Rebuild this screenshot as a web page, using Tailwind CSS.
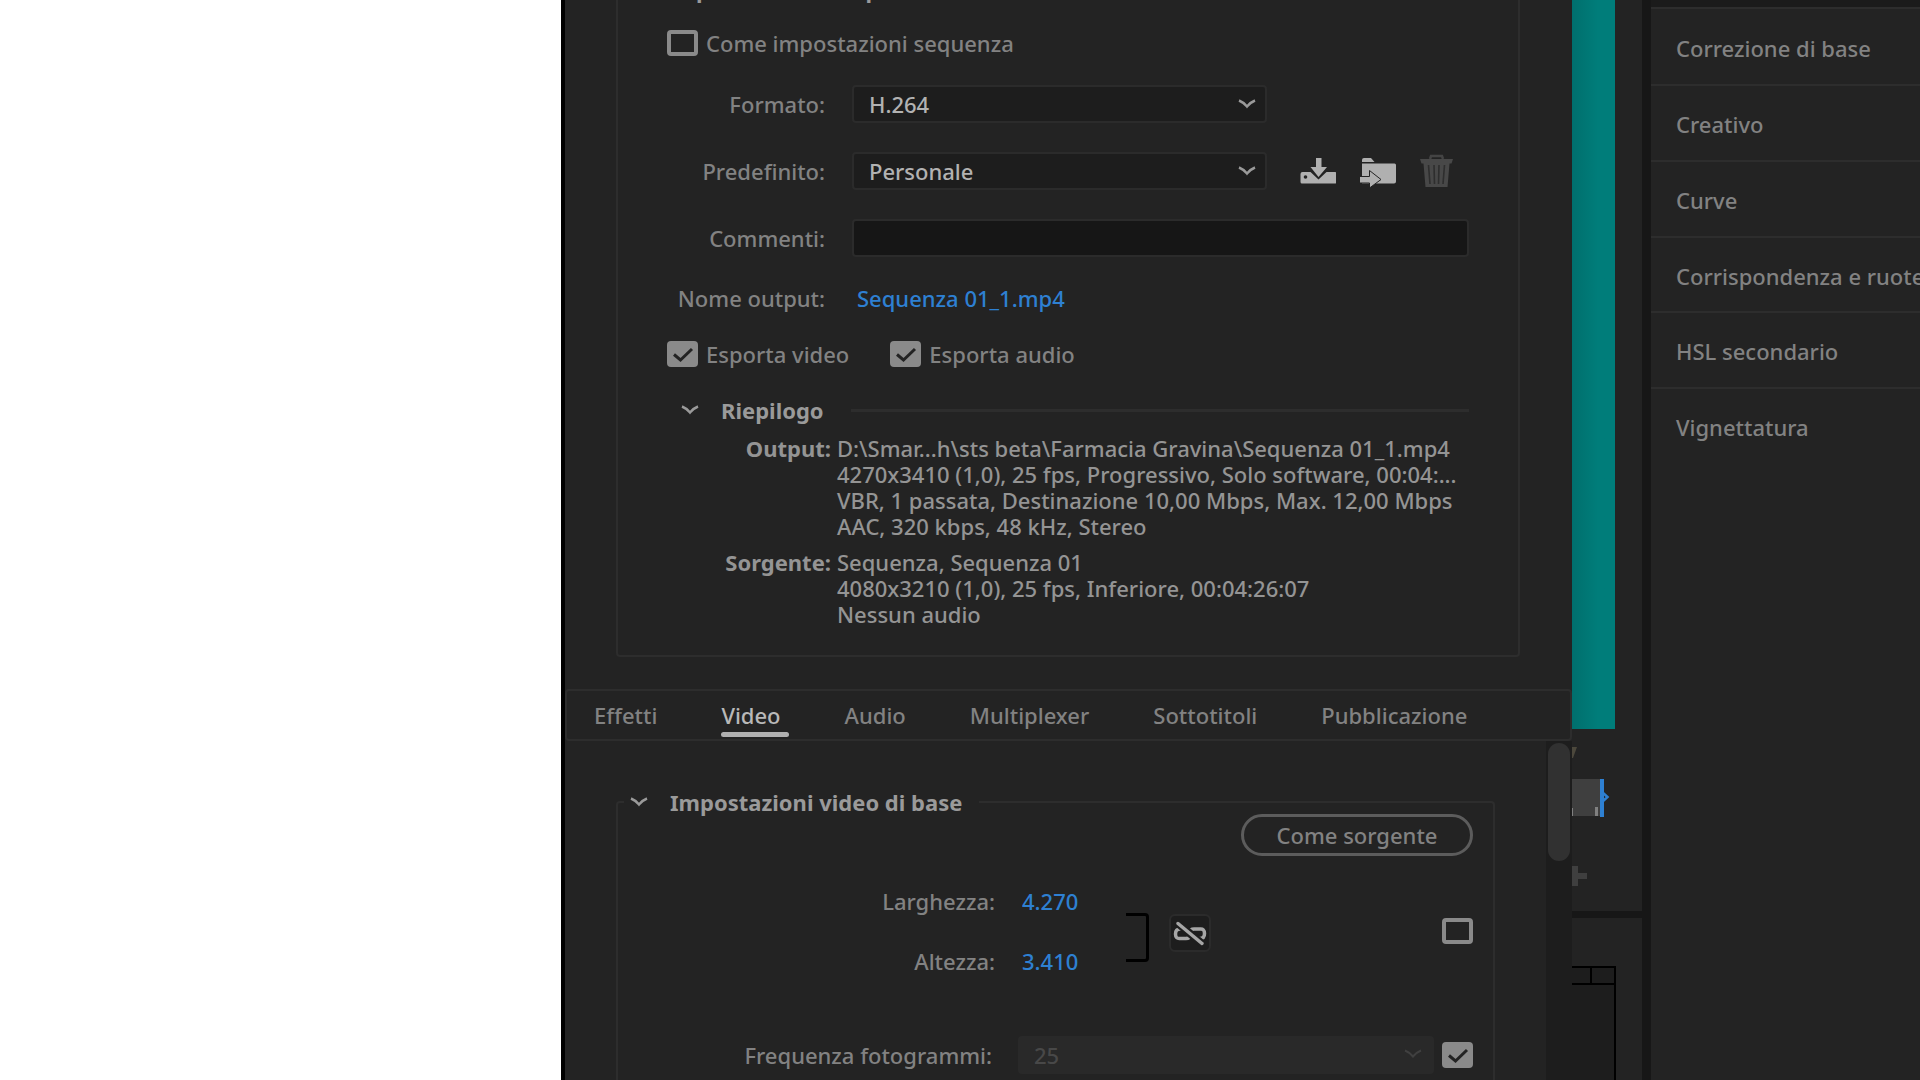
<!DOCTYPE html>
<html lang="it">
<head>
<meta charset="utf-8">
<title>Impostazioni di esportazione</title>
<script src="https://cdn.jsdelivr.net/npm/@tailwindcss/browser@4"></script>
</head>
<body class="bg-white">
<div class="grid h-screen grid-cols-[561fr_1011fr_348fr] overflow-hidden font-['Noto_Sans',sans-serif] text-[22px] font-medium leading-[26px] text-[#828282]">
  <div class="bg-white"></div>

  <!-- Export settings dialog -->
  <main class="flex min-w-0 flex-col border-l-4 border-black bg-[#232323]">
    <fieldset class="-mt-[26px] ml-[51px] mr-[52px] rounded border-2 border-[#2d2d2d] pb-[28px] pr-[49px]">
      <legend class="ml-12 h-[30px] font-bold leading-[30px] text-[#9a9a9a]">Impostazioni di esportazione</legend>

      <label class="ml-[49px] mt-[26px] flex h-[26px] items-center gap-2">
        <input type="checkbox" class="h-[26px] w-[31px] appearance-none rounded border-4 border-[#8a8a8a]">
        Come impostazioni sequenza
      </label>

      <div class="mt-[29px] grid grid-cols-[207px_1fr] items-center gap-x-[27px] gap-y-[29px]">
        <label for="formato" class="text-right">Formato:</label>
        <div class="relative w-[415px]">
          <select id="formato" class="h-[38px] w-full appearance-none rounded border-2 border-[#2b2b2b] bg-[#1d1d1d] px-[15px] text-[#b2b2b2]"><option>H.264</option></select>
          <svg class="pointer-events-none absolute right-[11px] top-[14px]" width="18" height="10" viewBox="0 0 18 10" fill="none" stroke="#9a9a9a" stroke-width="2.500"><path d="M1 1.500 Q5 3 9 7.500 Q13 3 17 1.500"/></svg>
        </div>

        <label for="predefinito" class="text-right">Predefinito:</label>
        <div class="flex items-center">
          <div class="relative w-[415px]">
            <select id="predefinito" class="h-[38px] w-full appearance-none rounded border-2 border-[#2b2b2b] bg-[#1d1d1d] px-[15px] text-[#b2b2b2]"><option>Personale</option></select>
            <svg class="pointer-events-none absolute right-[11px] top-[14px]" width="18" height="10" viewBox="0 0 18 10" fill="none" stroke="#9a9a9a" stroke-width="2.500"><path d="M1 1.500 Q5 3 9 7.500 Q13 3 17 1.500"/></svg>
          </div>
          <div class="ml-[33px] flex gap-6">
            <button type="button" aria-label="Salva predefinito">
              <svg width="36" height="34" viewBox="0 0 36 34"><path fill="#b0b0b0" d="M2.500 18h8l8 7.500 8-7.500h8.500q1.500 0 1.500 1.500V28q0 1.500-1.500 1.500h-33Q.5 29.500.5 28v-8q0-2 2-2z"/><circle cx="5.500" cy="23" r="1.800" fill="#232323"/><path fill="#b0b0b0" d="M16 4h5.500v9H27l-8.500 10L10.500 13H16z"/></svg>
            </button>
            <button type="button" aria-label="Importa predefinito">
              <svg width="36" height="34" viewBox="0 0 36 34"><path fill="#b0b0b0" d="M2 6q0-2 2-2h7l3.500 4H2zM2 9.500h32.500q1.500 0 1.500 1.500v16.500q0 2-2 2H2z"/><path fill="#b0b0b0" stroke="#232323" stroke-width="1" d="M-1 22.500h10.500v-6L21 25.500 9.500 34v-5H-1z"/></svg>
            </button>
            <button type="button" aria-label="Elimina predefinito" disabled>
              <svg width="34" height="34" viewBox="0 0 34 34"><path fill="none" stroke="#444" stroke-width="2.500" d="M10 5l1-3h11l1 3"/><path fill="#484848" d="M0 5h33l-1.500 4.500H29.500L27.500 33h-22L3.500 9.500H1.500z"/><path stroke="#2e2e2e" stroke-width="1.600" d="M8.500 11l1.500 19M14 11l.5 19M19 11l-.5 19M24.500 11L23 30"/></svg>
            </button>
          </div>
        </div>

        <label for="commenti" class="text-right">Commenti:</label>
        <input id="commenti" type="text" class="h-[38px] w-full rounded border-2 border-[#2b2b2b] bg-[#161616] px-[15px]">
      </div>

      <div class="mt-[26px] grid h-[30px] grid-cols-[207px_1fr] items-center gap-x-8">
        <span class="text-right">Nome output:</span>
        <a href="#" class="text-[#2e80d2]">Sequenza 01_1.mp4</a>
      </div>

      <div class="ml-[49px] mt-7 flex h-[26px] gap-[41px]">
        <label class="flex items-center gap-2">
          <span class="relative h-[26px] w-[31px]">
            <input type="checkbox" checked class="block h-[26px] w-[31px] appearance-none rounded bg-[#8a8a8a]">
            <svg class="pointer-events-none absolute left-0 top-0" width="31" height="26" viewBox="0 0 31 26" fill="none" stroke="#232323" stroke-width="3"><path d="M7 13.500l6.500 5.500L25 8"/></svg>
          </span>
          Esporta video
        </label>
        <label class="flex items-center gap-2">
          <span class="relative h-[26px] w-[31px]">
            <input type="checkbox" checked class="block h-[26px] w-[31px] appearance-none rounded bg-[#8a8a8a]">
            <svg class="pointer-events-none absolute left-0 top-0" width="31" height="26" viewBox="0 0 31 26" fill="none" stroke="#232323" stroke-width="3"><path d="M7 13.500l6.500 5.500L25 8"/></svg>
          </span>
          Esporta audio
        </label>
      </div>

      <div class="ml-[63px] mt-7 flex h-[30px] items-center">
        <button type="button" class="flex items-center gap-[22px] font-bold text-[#9a9a9a]">
          <svg width="18" height="10" viewBox="0 0 18 10" fill="none" stroke="#9a9a9a" stroke-width="2.500"><path d="M1 1.500 Q5 3 9 7.500 Q13 3 17 1.500"/></svg>
          Riepilogo
        </button>
        <div class="ml-[27px] h-[3px] flex-1 bg-[#2d2d2d]"></div>
      </div>

      <dl class="mt-[10px] grid grid-cols-[213px_1fr] gap-x-[6px] gap-y-[10px] whitespace-nowrap text-[#949494]">
        <dt class="text-right font-bold">Output:</dt>
        <dd>D:\Smar...h\sts beta\Farmacia Gravina\Sequenza 01_1.mp4<br>4270x3410 (1,0), 25 fps, Progressivo, Solo software, 00:04:...<br>VBR, 1 passata, Destinazione 10,00 Mbps, Max. 12,00 Mbps<br>AAC, 320 kbps, 48 kHz, Stereo</dd>
        <dt class="text-right font-bold">Sorgente:</dt>
        <dd>Sequenza, Sequenza 01<br>4080x3210 (1,0), 25 fps, Inferiore, 00:04:26:07<br>Nessun audio</dd>
      </dl>
    </fieldset>

    <nav class="mt-8 flex h-[52px] shrink-0 items-center gap-16 rounded border-2 border-[#2d2d2d] pl-[27px]">
      <button type="button">Effetti</button>
      <button type="button" class="relative text-[#b8b8b8]">Video<span class="absolute -bottom-[9px] left-0 h-[5px] w-[68px] rounded-sm bg-[#b0b0b0]"></span></button>
      <button type="button">Audio</button>
      <button type="button">Multiplexer</button>
      <button type="button">Sottotitoli</button>
      <button type="button">Pubblicazione</button>
    </nav>

    <div class="flex min-h-0 flex-1">
      <div class="flex min-w-0 flex-1 pl-[51px] pr-[51px] pt-[49px]">
        <fieldset class="min-w-0 flex-1 rounded-t border-2 border-b-0 border-[#2d2d2d] pr-[20px]">
          <legend class="ml-1.5 pl-1.5 pr-[17px]">
            <button type="button" class="flex h-6 items-center gap-[22px] font-bold text-[#9a9a9a]">
              <svg width="18" height="10" viewBox="0 0 18 10" fill="none" stroke="#9a9a9a" stroke-width="2.500"><path d="M1 1.500 Q5 3 9 7.500 Q13 3 17 1.500"/></svg>
              Impostazioni video di base
            </button>
          </legend>
          <div class="flex justify-end">
            <button type="button" class="h-[42px] w-[232px] rounded-full border-[3px] border-[#5c5c5c]">Come sorgente</button>
          </div>

          <div class="mt-[15px] flex items-center">
            <div class="grid grid-cols-[377px_58px] gap-x-[27px] leading-[60px]">
              <label for="larghezza" class="text-right">Larghezza:</label>
              <input id="larghezza" type="text" value="4.270" class="w-full text-[#2e80d2]">
              <label for="altezza" class="text-right">Altezza:</label>
              <input id="altezza" type="text" value="3.410" class="w-full text-[#2e80d2]">
            </div>
            <svg class="ml-[46px]" width="23" height="62" viewBox="0 0 23 62" fill="none" stroke="#000" stroke-width="3"><path d="M0 14.500h19q2.500 0 2.500 2.500v41q0 2.500-2.500 2.500H0"/></svg>
            <button type="button" aria-label="Blocca proporzioni" class="mt-1 ml-5 rounded-md border-2 border-[#2b2b2b] bg-[#1d1d1d]">
              <svg width="38" height="34" viewBox="0 0 38 34" fill="none" stroke="#a6a6a6" stroke-width="3.500" stroke-linecap="round"><path d="M12 13H9q-4.500 0-4.500 5t4.500 4.500h6q4 0 5-3.500M26 22.500h3q4.500 0 4.500-5T29 13h-6q-4 0-5 3.500"/><path stroke="#1d1d1d" stroke-width="8" d="M9 9l20 17"/><path d="M7 7.500l24 20"/></svg>
            </button>
            <input type="checkbox" aria-label="Come sorgente" class="ml-auto h-[26px] w-[31px] appearance-none rounded border-4 border-[#8a8a8a]">
          </div>

          <div class="mt-[45px] flex items-center">
            <label for="frequenza" class="w-[374px] text-right">Frequenza fotogrammi:</label>
            <div class="relative ml-[26px] flex-1">
              <select id="frequenza" disabled class="h-[38px] w-full appearance-none rounded bg-[#292929] px-4 text-[#484848] opacity-100"><option>25</option></select>
              <svg class="pointer-events-none absolute right-3 top-[13px]" width="18" height="10" viewBox="0 0 18 10" fill="none" stroke="#404040" stroke-width="2"><path d="M1 1.500 Q5 3 9 7.500 Q13 3 17 1.500"/></svg>
            </div>
            <span class="relative ml-2 h-[26px] w-[31px]">
              <input type="checkbox" checked aria-label="Frequenza come sorgente" class="block h-[26px] w-[31px] appearance-none rounded bg-[#8a8a8a]">
              <svg class="pointer-events-none absolute left-0 top-0" width="31" height="26" viewBox="0 0 31 26" fill="none" stroke="#232323" stroke-width="3"><path d="M7 13.500l6.500 5.500L25 8"/></svg>
            </span>
          </div>
        </fieldset>
      </div>
      <div class="w-[26px] bg-[#1d1d1d] px-0.5 pt-0.5"><div class="h-[118px] rounded-full bg-[#313131]"></div></div>
    </div>
  </main>

  <!-- Application behind the dialog -->
  <div class="flex min-w-0 bg-[#232323]">
    <div class="flex w-[70px] shrink-0 flex-col">
      <div class="h-[729px] w-[43px] shrink-0 bg-linear-to-r from-[#006f6d] to-[#007d7a] to-60%"></div>
      <svg class="shrink-0" width="70" height="182" viewBox="0 0 70 182">
        <path fill="#4c483c" d="M0 18h5l-4 11H0z"/>
        <path fill="#3f3f3f" d="M0 50h28v37H0z"/>
        <path fill="#808080" d="M23 78h3v9h-3zM0 79h1v8H0z"/>
        <path fill="#2e80d2" d="M28 50h4v38h-4z"/>
        <path fill="none" stroke="#2e80d2" stroke-width="2.500" d="M30 63l5.500 5-5.500 5"/>
        <path fill="#3f3f3f" d="M0 137h6v7h9v6H6v7H0z"/>
      </svg>
      <div class="h-[7px] shrink-0 bg-[#171717]"></div>
      <div class="mt-12 flex w-[44px] flex-1 flex-col border-r-2 border-t-2 border-black bg-[#1d1d1d]">
        <div class="h-[17px] border-b-2 border-black pl-[18px]"><div class="h-full w-0.5 bg-black"></div></div>
      </div>
    </div>
    <div class="w-[9px] shrink-0 bg-[#171717]"></div>
    <ul class="min-w-0 flex-1 divide-y-2 divide-[#2d2d2d] overflow-hidden whitespace-nowrap">
      <li class="h-[9px] bg-[#1b1b1b]"></li>
      <li class="flex h-[77px] items-center px-[25px] pt-0.5">Correzione di base</li>
      <li class="flex h-[76px] items-center px-[25px] pt-0.5">Creativo</li>
      <li class="flex h-[76px] items-center px-[25px] pt-0.5">Curve</li>
      <li class="flex h-[75px] items-center px-[25px] pt-0.5">Corrispondenza e ruote</li>
      <li class="flex h-[76px] items-center px-[25px] pt-0.5">HSL secondario</li>
      <li class="flex h-[74px] items-center px-[25px] pt-0.5">Vignettatura</li>
    </ul>
  </div>
</div>
</body>
</html>
